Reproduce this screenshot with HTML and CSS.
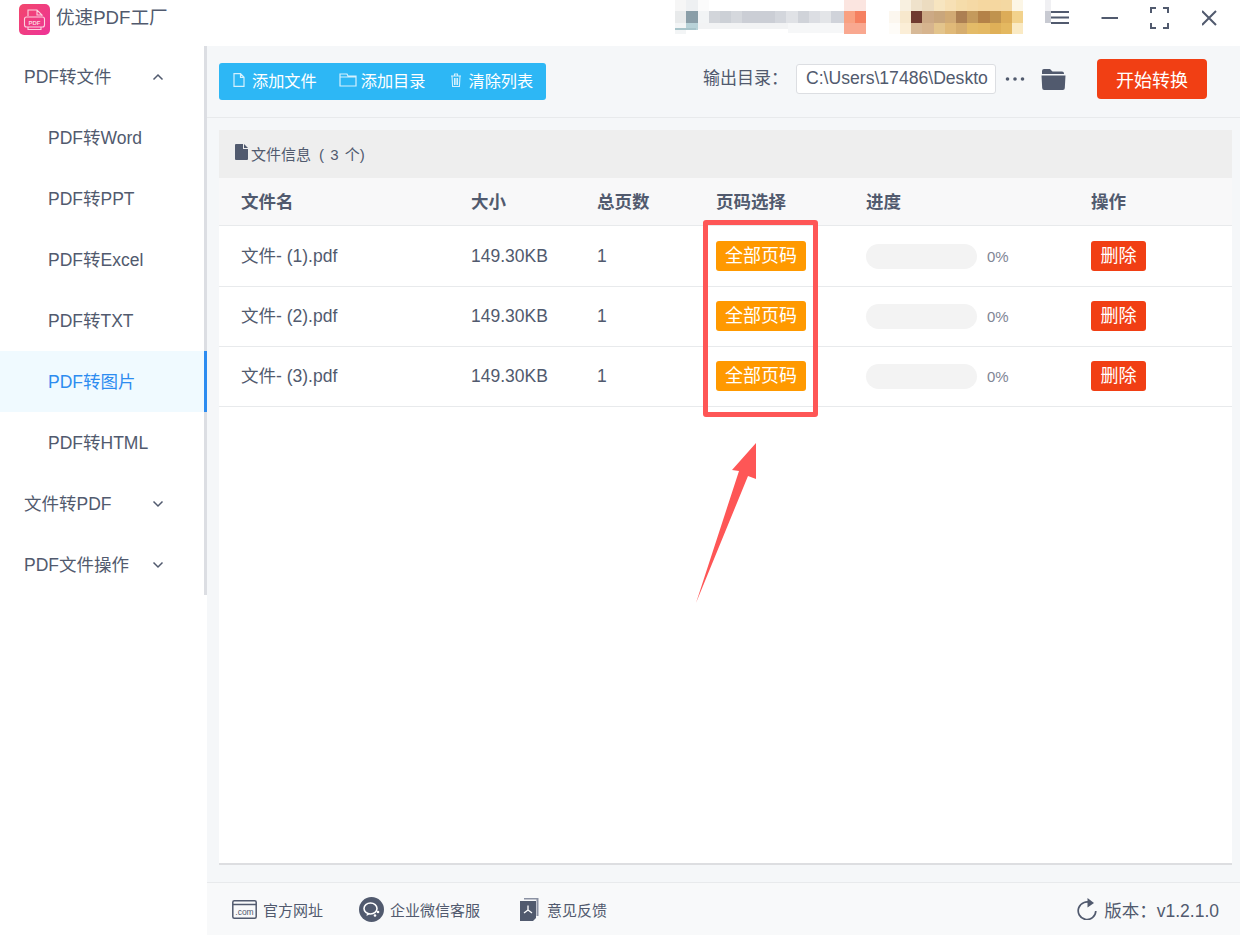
FILE: index.html
```html
<!DOCTYPE html>
<html lang="zh-CN">
<head>
<meta charset="utf-8">
<title>优速PDF工厂</title>
<link rel="stylesheet" href="styles.css">
</head>
<body>
<div class="app">
  <header class="titlebar">
    <svg class="logo" width="31" height="31" viewBox="0 0 31 31">
      <defs><linearGradient id="lg" x1="0" y1="0" x2="1" y2="1"><stop offset="0" stop-color="#f2476c"/><stop offset="1" stop-color="#ee3398"/></linearGradient></defs>
      <rect width="31" height="31" rx="5" fill="url(#lg)"/>
      <path d="M9 12V6h9l5 5v1M18 6v5h5" fill="none" stroke="#fbd3df" stroke-width="1.100"/>
      <rect x="5.500" y="13" width="20" height="10" rx="2" fill="none" stroke="#fbd3df" stroke-width="1.100"/>
      <path d="M9 23v2.500h13V23" fill="none" stroke="#fbd3df" stroke-width="1.100"/>
      <text x="15.500" y="20.500" text-anchor="middle" class="logo-pdf">PDF</text>
    </svg>
    <span class="app-name">优速PDF工厂</span>
    <svg class="blur" width="376" height="46" viewBox="675 0 376 46" shape-rendering="crispEdges">
      <path fill="#f6f6f6" d="M675 0h11v11h-11z"/><path fill="#eef0f2" d="M686 0h12v11h-12z"/><path fill="#fbfbfb" d="M698 0h11v11h-11z"/>
      <path fill="#e8eaeb" d="M675 11h11v12h-11z"/><path fill="#8a9ea8" d="M686 11h12v12h-12z"/><path fill="#f2f4f5" d="M698 11h11v12h-11z"/>
      <path fill="#d2d5da" d="M709 11h11v12h-11z"/><path fill="#ccd0d6" d="M720 11h11v12h-11z"/><path fill="#d5d8dd" d="M731 11h11v12h-11z"/><path fill="#cbced5" d="M742 11h33v12h-33z"/><path fill="#d3d6dc" d="M775 11h11v12h-11z"/><path fill="#e0e2e6" d="M786 11h12v12h-12z"/><path fill="#d0d3d9" d="M798 11h11v12h-11z"/><path fill="#dcdee3" d="M809 11h11v12h-11z"/><path fill="#e3e5e8" d="M820 11h11v12h-11z"/><path fill="#d0d3da" d="M831 11h13v12h-13z"/>
      <path fill="#f3f5f6" d="M675 23h11v11h-11z"/><path fill="#b8d2d8" d="M686 23h12v7h-12z"/><path fill="#f2f3f4" d="M698 23h90v6h-90z"/><path fill="#f6f7f8" d="M788 23h56v10h-56z"/>
      <path fill="#a8c4ca" d="M672 28h24v2h-24z"/>
      <path fill="#fbe5e0" d="M844 0h22v11h-22z"/><path fill="#f9a080" d="M844 11h11v12h-11z"/><path fill="#f58060" d="M855 11h11v12h-11z"/><path fill="#f9a890" d="M844 23h22v11h-22z"/>
      <path fill="#f8f0e0" d="M900 0h11v11h-11z"/><path fill="#efe2cb" d="M911 0h11v11h-11z"/><path fill="#ecdcc0" d="M922 0h12v11h-12z"/><path fill="#f7e5c0" d="M934 0h11v11h-11z"/><path fill="#f7e0b5" d="M945 0h11v11h-11z"/><path fill="#f5dcaa" d="M956 0h11v11h-11z"/><path fill="#f5d9a5" d="M967 0h11v11h-11z"/><path fill="#f5d7a0" d="M978 0h23v11h-23z"/><path fill="#f4d8a2" d="M1001 0h11v11h-11z"/><path fill="#fcf6e6" d="M1012 0h11v11h-11z"/>
      <path fill="#fcf7ef" d="M889 11h11v12h-11z"/><path fill="#f7e8cd" d="M900 11h11v12h-11z"/><path fill="#703a30" d="M911 11h11v12h-11z"/><path fill="#cca985" d="M922 11h12v12h-12z"/><path fill="#c9a67c" d="M934 11h11v12h-11z"/><path fill="#d1aa74" d="M945 11h11v12h-11z"/><path fill="#ac7f52" d="M956 11h11v12h-11z"/><path fill="#c49a5c" d="M967 11h11v12h-11z"/><path fill="#b48248" d="M978 11h12v12h-12z"/><path fill="#c0934e" d="M990 11h11v12h-11z"/><path fill="#dcac58" d="M1001 11h11v12h-11z"/><path fill="#f2d28c" d="M1012 11h11v12h-11z"/>
      <path fill="#fefcf8" d="M889 23h11v11h-11z"/><path fill="#fbeed7" d="M900 23h11v11h-11z"/><path fill="#d7b997" d="M911 23h11v11h-11z"/><path fill="#d6b48e" d="M922 23h12v11h-12z"/><path fill="#e3c48c" d="M934 23h11v11h-11z"/><path fill="#e0b978" d="M945 23h11v11h-11z"/><path fill="#d6ad6e" d="M956 23h11v11h-11z"/><path fill="#e4bb68" d="M967 23h11v11h-11z"/><path fill="#e4b964" d="M978 23h12v11h-12z"/><path fill="#dfb058" d="M990 23h11v11h-11z"/><path fill="#e4b860" d="M1001 23h11v11h-11z"/><path fill="#faeac4" d="M1012 23h11v11h-11z"/>
      <path fill="#f0f0f3" d="M1045 0h6v11h-6z"/><path fill="#c8cad2" d="M1045 11h6v12h-6z"/>
    </svg>
    <div class="win-controls">
      <svg width="18" height="46" viewBox="0 0 18 46"><path d="M0 12h18M0 17.500h18M0 23h18" stroke="#515a6e" stroke-width="2"/></svg>
      <svg width="18" height="46" viewBox="0 0 18 46"><path d="M.5 18h16.500" stroke="#515a6e" stroke-width="2"/></svg>
      <svg class="win-full" width="20" height="46" viewBox="0 0 20 46"><path d="M1 13V8h5M13 8h5v5M18 23v5h-5M6 28H1v-5" fill="none" stroke="#515a6e" stroke-width="2"/></svg>
      <svg width="16" height="46" viewBox="0 0 16 46"><path d="M0 11l14 14M14 11L0 25" stroke="#515a6e" stroke-width="2"/></svg>
    </div>
  </header>

  <div class="body-row">
    <nav class="sidebar">
      <div class="menu-item top">PDF转文件<svg class="chev" width="12" height="8" viewBox="0 0 12 8"><path d="M1.500 6.500L6 2l4.500 4.500" fill="none" stroke="#515a6e" stroke-width="1.500"/></svg></div>
      <div class="menu-item sub">PDF转Word</div>
      <div class="menu-item sub">PDF转PPT</div>
      <div class="menu-item sub">PDF转Excel</div>
      <div class="menu-item sub">PDF转TXT</div>
      <div class="menu-item sub active">PDF转图片</div>
      <div class="menu-item sub">PDF转HTML</div>
      <div class="menu-item top">文件转PDF<svg class="chev" width="12" height="8" viewBox="0 0 12 8"><path d="M1.500 1.500L6 6l4.500-4.500" fill="none" stroke="#515a6e" stroke-width="1.500"/></svg></div>
      <div class="menu-item top">PDF文件操作<svg class="chev" width="12" height="8" viewBox="0 0 12 8"><path d="M1.500 1.500L6 6l4.500-4.500" fill="none" stroke="#515a6e" stroke-width="1.500"/></svg></div>
    </nav>

    <main class="main">
      <div class="toolbar">
        <div class="btn-group">
          <span class="tool first"><svg width="12" height="14" viewBox="0 0 12 14"><path d="M1 .7h6.500L11 4.300v9H1zM7.500.7v3.600H11" fill="none" stroke="#d6f1fd" stroke-width="1.200"/></svg>添加文件</span>
          <span class="tool second"><svg width="18" height="14" viewBox="0 0 18 14"><path d="M1 1h7l1 2h8v10H1zM1 4h16" fill="none" stroke="#d6f1fd" stroke-width="1.200"/></svg>添加目录</span>
          <span class="tool third"><svg width="12" height="14" viewBox="0 0 12 14"><path d="M1 3h10M4.500 3V1h3v2M2 3l.6 10.500h6.800L10 3M4.500 5v7M6 5v7M7.500 5v7" fill="none" stroke="#d6f1fd" stroke-width="1.100"/></svg>清除列表</span>
        </div>
        <div class="output">
          <span class="out-label">输出目录：</span>
          <div class="path-input">C:\Users\17486\Deskto</div>
          <svg class="dots" width="20" height="4" viewBox="0 0 20 4"><circle cx="2.500" cy="2" r="1.800" fill="#515a6e"/><circle cx="10" cy="2" r="1.800" fill="#515a6e"/><circle cx="17.500" cy="2" r="1.800" fill="#515a6e"/></svg>
          <svg class="folder" width="25" height="22" viewBox="0 0 25 22"><path d="M1 3a2 2 0 0 1 2-2h6l2.500 2.500H21a2 2 0 0 1 2 2V6H1zM.5 7.500h24l-.7 12.500a2 2 0 0 1-2 2H3.200a2 2 0 0 1-2-2z" fill="#515a6e"/></svg>
          <button class="start">开始转换</button>
        </div>
      </div>

      <section class="panel">
        <div class="panel-title"><svg width="13" height="16" viewBox="0 0 13 16"><path d="M0 1a1 1 0 0 1 1-1h7v5h5v10a1 1 0 0 1-1 1H1a1 1 0 0 1-1-1zM9 0l4 4H9z" fill="#515a6e"/></svg><span>文件信息</span><span class="count">( 3 个)</span></div>
        <div class="row head">
          <div>文件名</div><div>大小</div><div>总页数</div><div>页码选择</div><div>进度</div><div>操作</div>
        </div>
        <div class="row">
          <div class="name">文件- (1).pdf</div><div>149.30KB</div><div>1</div><div><span class="tag">全部页码</span></div><div class="prog"><span class="track"></span><span class="pct">0%</span></div><div><span class="del">删除</span></div>
        </div>
        <div class="row">
          <div class="name">文件- (2).pdf</div><div>149.30KB</div><div>1</div><div><span class="tag">全部页码</span></div><div class="prog"><span class="track"></span><span class="pct">0%</span></div><div><span class="del">删除</span></div>
        </div>
        <div class="row">
          <div class="name">文件- (3).pdf</div><div>149.30KB</div><div>1</div><div><span class="tag">全部页码</span></div><div class="prog"><span class="track"></span><span class="pct">0%</span></div><div><span class="del">删除</span></div>
        </div>
      </section>

      <footer class="footer">
        <span class="f-item"><svg width="25" height="19" viewBox="0 0 25 19"><rect x=".8" y=".8" width="23.400" height="17.400" rx="1.500" fill="none" stroke="#515a6e" stroke-width="1.500"/><path d="M1 4.500h23" stroke="#515a6e" stroke-width="1.500"/><text x="12.500" y="14.500" text-anchor="middle" class="com">.com</text></svg>官方网址</span>
        <span class="f-item wx"><svg width="25" height="25" viewBox="0 0 25 25"><circle cx="12.500" cy="12.500" r="12.500" fill="#515a6e"/><ellipse cx="11.500" cy="11.500" rx="6.500" ry="5.500" fill="none" stroke="#fff" stroke-width="1.600"/><path d="M8 16l-.5 3 3.500-2" fill="#fff"/><circle cx="19" cy="15" r="1.300" fill="#fff"/><circle cx="16" cy="18.500" r="1.300" fill="#fff"/></svg>企业微信客服</span>
        <span class="f-item fb"><svg width="19" height="23" viewBox="0 0 19 23"><path d="M4 0h14.500v18h-2V1.500H4z" fill="#8b92a3"/><path d="M0 3h16v17l-3 3H0z" fill="#515a6e"/><path d="M8 7.500v4.500M8 12l-4 3M8 12l4 3" fill="none" stroke="#fff" stroke-width="1.300"/></svg>意见反馈</span>
        <span class="version"><svg width="20" height="22" viewBox="0 0 20 22"><path d="M14.500 5.200A8.800 8.800 0 1 0 18.800 13" fill="none" stroke="#515a6e" stroke-width="1.700"/><path d="M10.500 0l6.500 5-6.500 4.500z" fill="#515a6e"/></svg>版本：v1.2.1.0</span>
      </footer>
    </main>
  </div>
</div>

<div class="callout-box"></div>
<svg class="callout-arrow" width="70" height="170" viewBox="690 440 70 170"><path d="M756 443L732 470l7 1L696 603l52-127 8 3z" fill="#fe5656"/></svg>
</body>
</html>
```

FILE: styles.css
```css
* { box-sizing: border-box; }
html, body { margin: 0; padding: 0; }
body {
  position: relative;
  width: 1240px;
  height: 935px;
  overflow: hidden;
  background: #fff;
  color: #515a6e;
  font-family: "Liberation Sans", "Noto Sans CJK SC", sans-serif;
  font-size: 17.5px;
}
.app { display: flex; flex-direction: column; height: 935px; }

.titlebar { display: flex; align-items: flex-start; height: 46px; flex: none; padding-left: 19px; background: #fff; }
.logo { margin-top: 4px; flex: none; }
.logo-pdf { fill: #fbd3df; font-size: 6px; font-weight: 700; font-family: "Liberation Sans", sans-serif; }
.app-name { margin-left: 6px; font-size: 18.600px; line-height: 36px; }
.blur { margin-left: auto; flex: none; }
.win-controls { display: flex; gap: 32px; padding-right: 22px; flex: none; }
.win-controls svg { display: block; }
.win-controls .win-full { margin-left: -1px; }

.body-row { display: flex; flex: 1; min-height: 0; }

.sidebar { width: 207px; height: 549px; flex: none; border-right: 3px solid #dcdee3; background: #fff; }
.menu-item { position: relative; display: flex; align-items: center; height: 61px; padding-bottom: 2px; }
.menu-item.top { padding-left: 24px; }
.menu-item.sub { padding-left: 48px; }
.menu-item.active { margin-right: -3px; color: #2d8cf0; background: #f0faff; border-right: 3px solid #2d8cf0; }
.chev { position: absolute; left: 152px; top: 27px; }

.main { display: flex; flex-direction: column; flex: 1; min-width: 0; background: #f5f7f9; }

.toolbar { display: flex; align-items: flex-start; justify-content: space-between; height: 72px; flex: none; padding: 17px 33px 0 12px; border-bottom: 1px solid #e8eaec; }
.btn-group { display: flex; align-items: center; width: 327px; height: 37px; padding-bottom: 3px; border-radius: 3px; background: #2db7f5; color: #fff; font-size: 16.200px; }
.tool { display: flex; align-items: center; }
.tool svg { flex: none; }
.tool.first { margin-left: 14px; gap: 7px; }
.tool.second { margin-left: 22px; gap: 4px; }
.tool.third { margin-left: 24px; gap: 7px; }

.output { display: flex; align-items: center; margin-top: -4px; height: 40px; }
.out-label { font-size: 17px; margin-right: 16px; margin-bottom: 5px; width: 77px; white-space: nowrap; }
.path-input { width: 200px; height: 30px; padding-left: 9px; border: 1px solid #dcdee2; border-radius: 3px; background: #fff; font-size: 17.600px; line-height: 26px; white-space: nowrap; overflow: hidden; }
.dots { margin-left: 9px; flex: none; }
.folder { margin-left: 16px; flex: none; }
.start { width: 110px; height: 40px; margin-left: 31px; padding: 0; border: 0; border-radius: 4px; background: #f13f14; color: #fff; font: inherit; font-size: 18px; }

.panel { display: flex; flex-direction: column; flex: none; height: 735px; margin: 12px 8px 0 12px; background: #fff; border-bottom: 2px solid #dddee1; }
.panel-title { display: flex; align-items: center; height: 48px; flex: none; padding-left: 16px; padding-bottom: 2px; background: #eee; font-size: 15px; }
.panel-title svg { margin-right: 3px; margin-top: -2px; }
.count { margin-left: 8px; word-spacing: 2px; }

.row { display: grid; grid-template-columns: 230px 126px 119px 150px 225px 163px; align-items: center; height: 60px; flex: none; box-shadow: 0 1px 0 #e8eaec; }
.row > div { padding-left: 22px; }
.row > .name { margin-top: -4px; }
.head { height: 48px; padding-bottom: 3px; background: #f8f8f9; box-shadow: inset 0 -1px 0 #e8eaec; font-weight: 700; }
.tag, .del { display: inline-block; height: 30px; border-radius: 3px; color: #fff; font-size: 18px; line-height: 30px; text-align: center; vertical-align: middle; }
.tag { width: 90px; background: #ff9900; }
.del { width: 55px; background: #f13f14; }
.prog { display: flex; align-items: center; }
.track { width: 111px; height: 25px; border-radius: 13px; background: #f3f3f3; }
.pct { margin-left: 10px; color: #808695; font-size: 15px; }

.footer { display: flex; align-items: center; height: 53px; margin-top: auto; flex: none; padding: 0 21px 0 25px; border-top: 1px solid #e8eaec; background: #f8f9fa; font-size: 15px; }
.f-item { display: flex; align-items: center; gap: 6px; }
.f-item.wx { margin-left: 36px; }
.f-item.fb { margin-left: 40px; gap: 8px; }
.com { fill: #515a6e; font-size: 8.500px; font-family: "Liberation Sans", sans-serif; }
.version { display: flex; align-items: center; gap: 7px; margin-left: auto; font-size: 17.500px; }

.callout-box { position: absolute; left: 703px; top: 220px; width: 115px; height: 197px; border: 5px solid #fe5656; border-radius: 3px; }
.callout-arrow { position: absolute; left: 690px; top: 440px; }
```
